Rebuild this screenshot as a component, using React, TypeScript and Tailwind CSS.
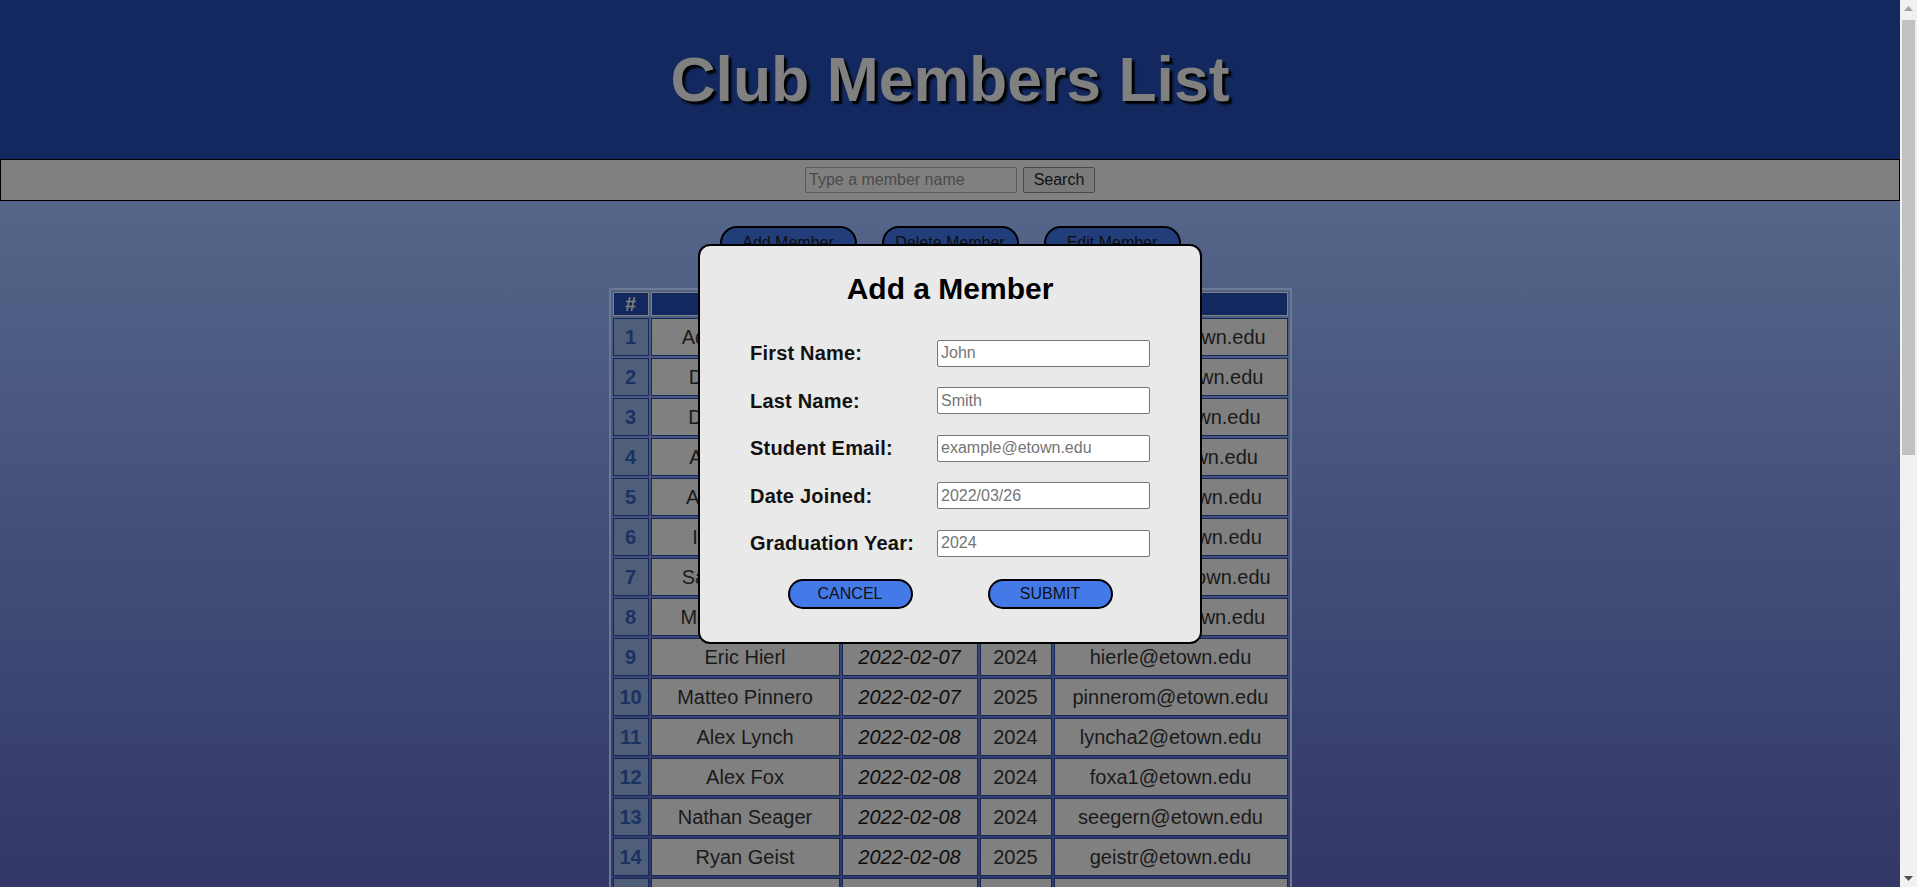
import React from 'react';

const members: [string, string, string, string][] = [
  ['Adam Bennett', '2022-02-01', '2024', 'bennetta@etown.edu'],
  ['Dylan Carter', '2022-02-01', '2025', 'carterd2@etown.edu'],
  ['David Moore', '2022-02-02', '2024', 'moored@etown.edu'],
  ['Aiden Walsh', '2022-02-02', '2025', 'walsha@etown.edu'],
  ['Adrian Lopez', '2022-02-03', '2024', 'lopeza1@etown.edu'],
  ['Ian Fletcher', '2022-02-04', '2024', 'fletcheri@etown.edu'],
  ['Sam Peterson', '2022-02-04', '2025', 'petersons@etown.edu'],
  ['Megan Brooks', '2022-02-07', '2024', 'brooksm@etown.edu'],
  ['Eric Hierl', '2022-02-07', '2024', 'hierle@etown.edu'],
  ['Matteo Pinnero', '2022-02-07', '2025', 'pinnerom@etown.edu'],
  ['Alex Lynch', '2022-02-08', '2024', 'lyncha2@etown.edu'],
  ['Alex Fox', '2022-02-08', '2024', 'foxa1@etown.edu'],
  ['Nathan Seager', '2022-02-08', '2024', 'seegern@etown.edu'],
  ['Ryan Geist', '2022-02-08', '2025', 'geistr@etown.edu'],
  ['Kyle Martin', '2022-02-09', '2024', 'martink@etown.edu'],
  ['Owen Baker', '2022-02-09', '2025', 'bakero@etown.edu'],
  ['Lily Chen', '2022-02-10', '2025', 'chenl@etown.edu'],
  ['Jacob Miller', '2022-02-10', '2024', 'millerj3@etown.edu'],
  ['Emma Roberts', '2022-02-11', '2025', 'robertse@etown.edu'],
  ['Noah Turner', '2022-02-14', '2024', 'turnern@etown.edu'],
  ['Chloe Adams', '2022-02-14', '2025', 'adamsc@etown.edu'],
  ['Luke Harris', '2022-02-15', '2024', 'harrisl@etown.edu'],
  ['Grace Young', '2022-02-15', '2025', 'youngg@etown.edu'],
  ['Ethan Clark', '2022-02-16', '2024', 'clarke2@etown.edu'],
  ['Mia Scott', '2022-02-17', '2025', 'scottm@etown.edu'],
  ['Logan Hall', '2022-02-18', '2024', 'halll@etown.edu'],
  ['Zoe Wright', '2022-02-21', '2025', 'wrightz@etown.edu'],
  ['Caleb King', '2022-02-22', '2024', 'kingc@etown.edu'],
  ['Ella Green', '2022-02-23', '2025', 'greene@etown.edu'],
  ['Henry Lewis', '2022-02-24', '2024', 'lewish@etown.edu'],
  ['Ava Nelson', '2022-02-25', '2025', 'nelsona@etown.edu'],
  ['Jack Perry', '2022-03-01', '2024', 'perryj@etown.edu'],
  ['Sophie Reed', '2022-03-02', '2025', 'reeds@etown.edu'],
  ['Mason Ward', '2022-03-03', '2024', 'wardm@etown.edu'],
  ['Leah Cooper', '2022-03-04', '2025', 'cooperl@etown.edu'],
];

const fields = [
  ['First Name:', 'John'],
  ['Last Name:', 'Smith'],
  ['Student Email:', 'example@etown.edu'],
  ['Date Joined:', '2022/03/26'],
  ['Graduation Year:', '2024'],
];

// classic window scrollbar, drawn since the page is longer than the viewport
function Scrollbar() {
  return (
    <div className="fixed top-0 right-0 w-[17px] h-screen bg-[#f1f1f1] flex flex-col">
      <div className="h-[17px] flex items-center justify-center">
        <svg width="9" height="5" viewBox="0 0 9 5"><path d="M4.5 0 L9 5 L0 5 Z" fill="#a3a3a3" /></svg>
      </div>
      <div className="flex-1 px-[2px] pt-[3px]">
        <div className="h-[435px] bg-[#c1c1c1]" />
      </div>
      <div className="h-[17px] flex items-center justify-center">
        <svg width="9" height="5" viewBox="0 0 9 5"><path d="M0 0 L9 0 L4.5 5 Z" fill="#505050" /></svg>
      </div>
    </div>
  );
}

export default function App() {
  return (
    <div className="min-h-screen mr-[17px] bg-fixed bg-linear-to-b from-[#607493] to-[#323767] font-['Liberation_Sans',Arial,sans-serif] pb-[40px]">
      {/* header */}
      <header className="h-[159px] bg-[#12285e] flex items-center justify-center">
        <h1 className="text-[62.5px] font-bold text-[#808080] [text-shadow:3px_3px_2px_#000]">Club Members List</h1>
      </header>

      {/* search bar */}
      <div className="h-[42px] border border-black bg-[#808080] flex items-center justify-center gap-[6px]">
        <input
          type="text"
          placeholder="Type a member name"
          className="w-[212px] h-[26px] px-[3px] text-[16px] bg-[#808080] border border-[#5a5a5a] rounded-[2px] placeholder:text-[#4a4a4a] outline-none"
        />
        <button className="w-[72px] h-[26px] text-[16px] text-[#111] bg-[#7a7a7a] border border-[#4a4a4a] rounded-[2px]">Search</button>
      </div>

      {/* actions */}
      <div className="flex justify-center gap-[25px] mt-[25px]">
        {['Add Member', 'Delete Member', 'Edit Member'].map((label) => (
          <button
            key={label}
            className="w-[137px] h-[34px] rounded-full border-2 border-black bg-[#213e7a] text-[16px] text-[#0d0d0d]"
          >
            {label}
          </button>
        ))}
      </div>

      {/* members table */}
      <div className="flex justify-center mt-[28px]">
        <table className="table-fixed border-separate border-spacing-[2px] border-2 border-[#6c7a94] text-[20px]">
          <thead>
            <tr className="h-[24px] leading-[20px] font-bold text-[#808080]">
              <th className="w-[36px] bg-[#12285e] border border-[#808080]">#</th>
              <th className="w-[189px] bg-[#12285e] border border-[#808080]">NAME</th>
              <th className="w-[136px] bg-[#12285e] border border-[#808080]">JOINED</th>
              <th className="w-[72px] bg-[#12285e] border border-[#808080]">YEAR</th>
              <th className="w-[234px] bg-[#12285e] border border-[#808080]">EMAIL</th>
            </tr>
          </thead>
          <tbody>
            {members.map(([name, date, year, email], i) => (
              <tr key={i} className="h-[38px] text-[#1a1a1a] text-center">
                <td className="bg-[#4f5e79] border border-[#14295a] font-bold text-[#1a3262]">{i + 1}</td>
                <td className="bg-[#808080] border border-[#14295a]">{name}</td>
                <td className="bg-[#808080] border border-[#14295a] italic text-[#0d0d0d]">{date}</td>
                <td className="bg-[#808080] border border-[#14295a]">{year}</td>
                <td className="bg-[#808080] border border-[#14295a]">{email}</td>
              </tr>
            ))}
          </tbody>
        </table>
      </div>

      {/* add member dialog */}
      <div className="fixed top-0 bottom-0 left-0 right-[17px] flex items-center justify-center">
        <div className="w-[504px] bg-[#e9e9e9] border-2 border-black rounded-[12px] px-[50px] pt-[26px] pb-[33px] flex flex-col">
          <h2 className="text-[30px] leading-[34px] font-bold text-black text-center">Add a Member</h2>
          <div className="mt-[34px] grid grid-cols-[187px_213px] gap-y-[20.5px]">
            {fields.map(([label, hint]) => (
              <React.Fragment key={label}>
                <label className="h-[27px] flex items-center text-[20px] font-bold text-[#111] tracking-[0.2px]">{label}</label>
                <input
                  type="text"
                  placeholder={hint}
                  className="h-[27px] w-[213px] px-[3px] text-[16px] bg-white border border-[#767676] rounded-[2px] placeholder:text-[#757575] outline-none"
                />
              </React.Fragment>
            ))}
          </div>
          <div className="mt-[22px] flex justify-center gap-[75px]">
            <button className="w-[125px] h-[30px] rounded-full border-2 border-black bg-[#4479e8] text-[16px] text-[#111]">CANCEL</button>
            <button className="w-[125px] h-[30px] rounded-full border-2 border-black bg-[#4479e8] text-[16px] text-[#111]">SUBMIT</button>
          </div>
        </div>
      </div>

      <Scrollbar />
    </div>
  );
}
